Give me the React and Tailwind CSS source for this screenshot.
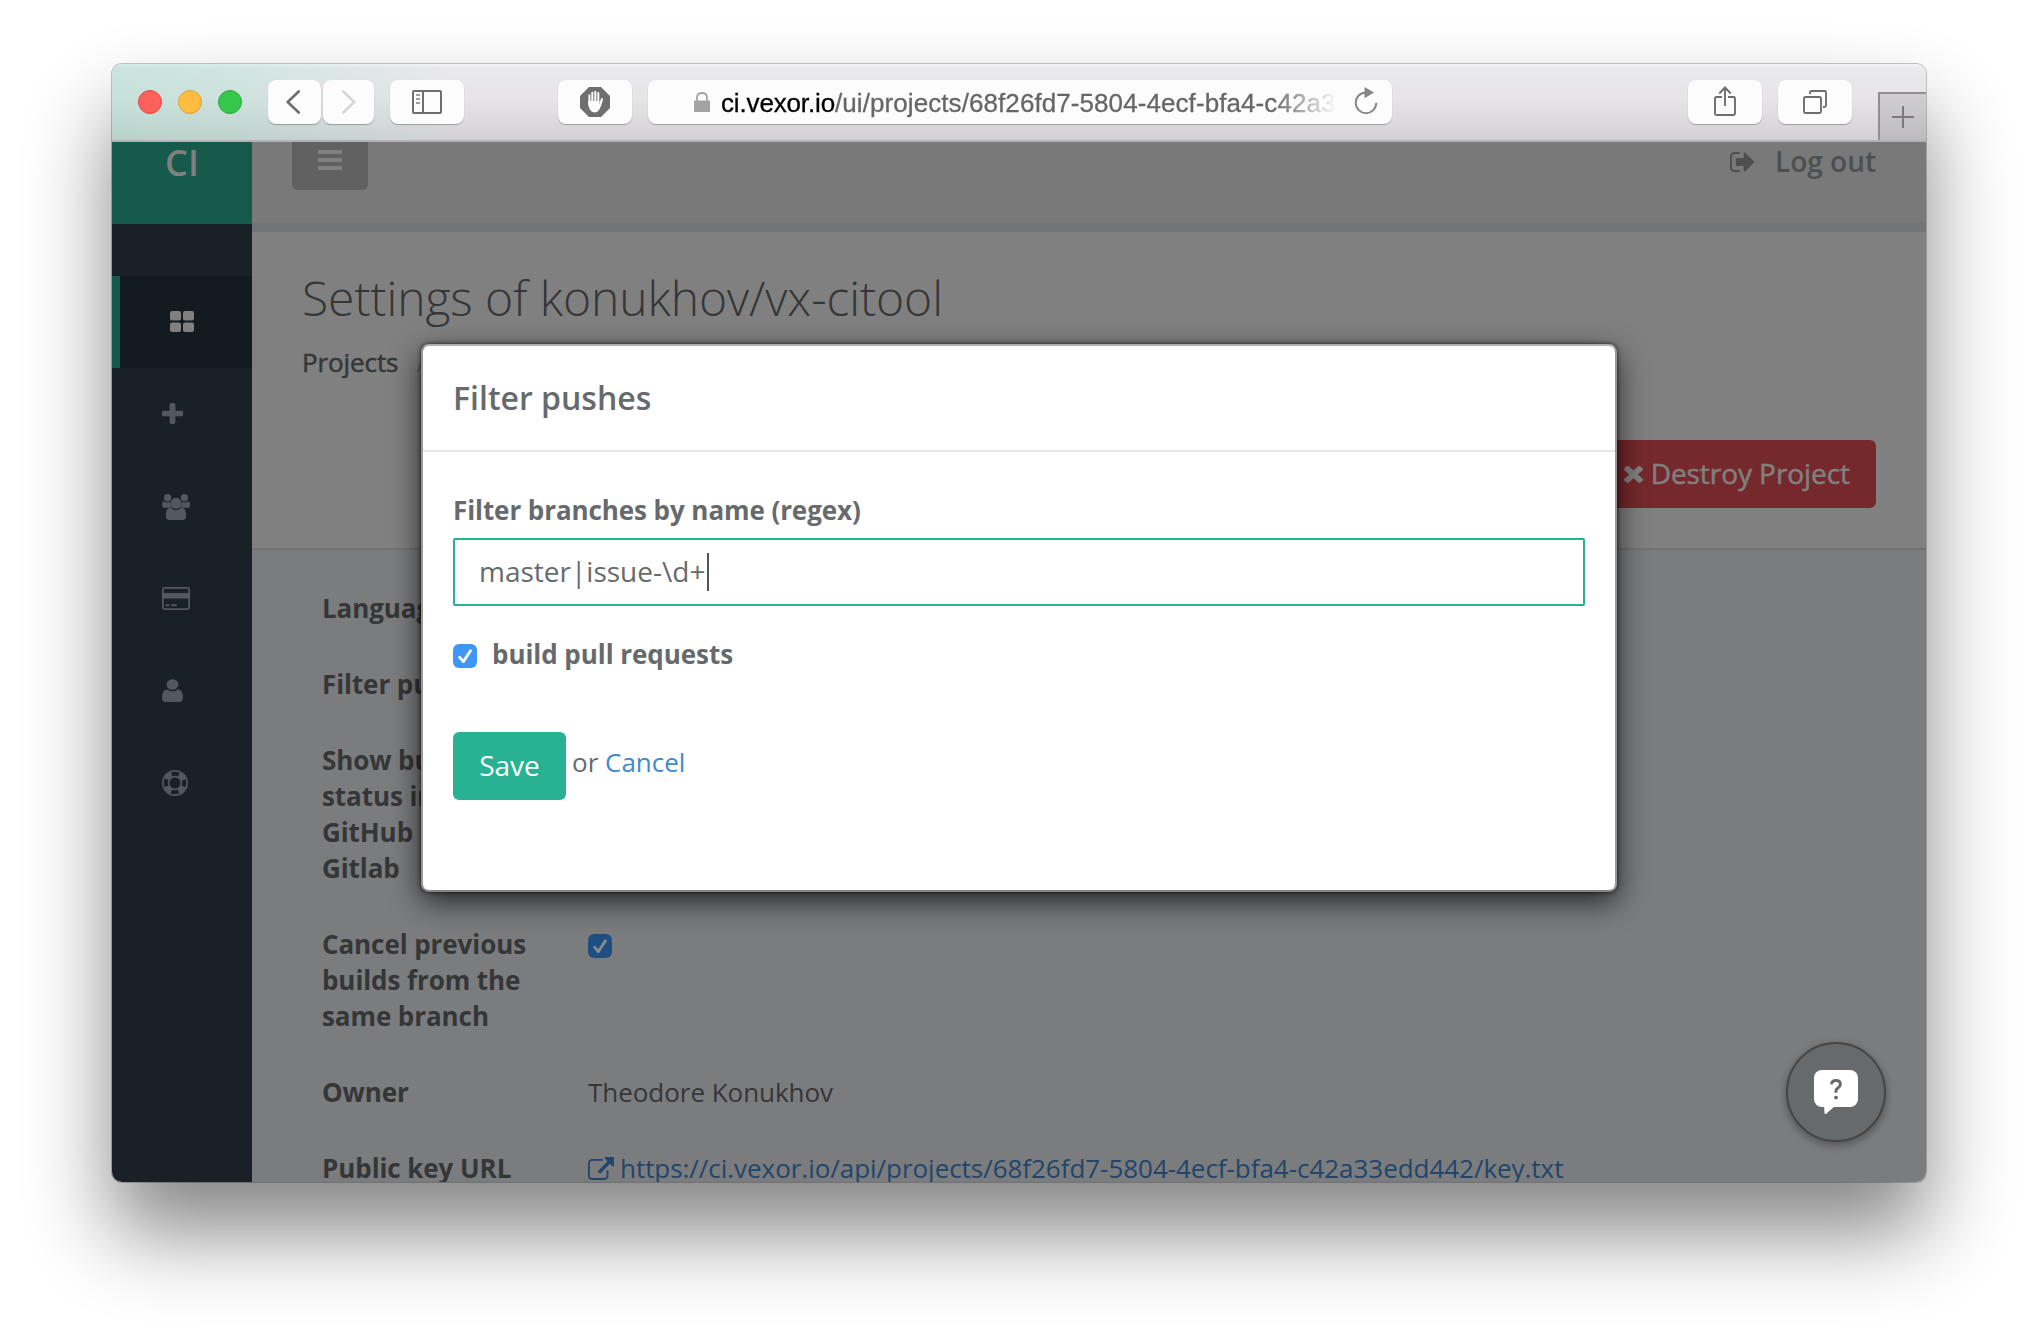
import React from "react";

/* Glyphs cropped to their own bounding box, so width and height set the drawn size. */
function Glyph({ box, className, children }) {
  return (
    <svg viewBox={box} preserveAspectRatio="none" fill="currentColor" className={"shrink-0 " + className}>
      {children}
    </svg>
  );
}

const ThLarge = () => (
  <Glyph box="0 0 24 21" className="-mt-px w-6 h-[21px]">
    <rect width="11" height="9.6" rx="2" />
    <rect x="13" width="11" height="9.6" rx="2" />
    <rect y="11.4" width="11" height="9.6" rx="2" />
    <rect x="13" y="11.4" width="11" height="9.6" rx="2" />
  </Glyph>
);
const Plus = () => (
  <Glyph box="192 128 1408 1408" className="-mt-px w-[21px] h-[21px]">
    <path d="M1600 736v192q0 40-28 68t-68 28h-416v416q0 40-28 68t-68 28h-192q-40 0-68-28t-28-68v-416h-416q-40 0-68-28t-28-68v-192q0-40 28-68t68-28h416v-416q0-40 28-68t68-28h192q40 0 68 28t28 68v416h416q40 0 68 28t28 68z" />
  </Glyph>
);
const Users = () => (
  <Glyph box="0 0 28 26" className="mt-px w-7 h-[26px]">
    <circle cx="5.6" cy="3.7" r="3.7" />
    <circle cx="22.4" cy="3.7" r="3.7" />
    <path d="M2 7.2q1.6 1.2 3.6 1.2 1.4 0 2.6-.6-.2 3.8 2 6H3q-3 0-3-2.600q0-3.800 2-4zM26 7.200q-1.600 1.200-3.600 1.200-1.400 0-2.600-.6.200 3.800-2 6H25q3 0 3-2.600 0-3.800-2-4z" />
    <circle cx="14" cy="9.300" r="5.500" />
    <path d="M8.600 13.700Q14 18.200 19.400 13.700Q24.200 13.800 24.200 21.800Q24.200 26 20.600 26H7.400Q3.800 26 3.800 21.800Q3.800 13.800 8.600 13.700z" />
  </Glyph>
);
const Card = () => (
  <Glyph box="0 0 28 23" className="w-7 h-[23px]">
    <path fillRule="evenodd" d="M2.400 0H25.600Q28 0 28 2.400V20.600Q28 23 25.600 23H2.400Q0 23 0 20.600V2.400Q0 0 2.400 0zM2.400 1.700Q1.800 1.700 1.800 2.400V6H26.200V2.400Q26.200 1.700 25.600 1.700zM1.800 11.500V20.500Q1.800 21.200 2.400 21.200H25.600Q26.200 21.200 26.200 20.500V11.500z" />
    <rect x="3.600" y="17.300" width="3.700" height="1.900" />
    <rect x="9.200" y="17.300" width="5.600" height="1.900" />
  </Glyph>
);
const User = () => (
  <Glyph box="256 128 1280 1536" className="w-[21px] h-[23px]">
    <path d="M1536 1399q0 109-62.5 187t-150.5 78h-854q-88 0-150.5-78t-62.5-187q0-85 8.5-160.5t31.5-152 58.5-131 94-89 134.5-34.5q131 128 313 128t313-128q76 0 134.5 34.5t94 89 58.5 131 31.500 152 8.500 160.500zm-280-920q0 159-105 260t-255 101-255-101-105-250 105-250 255-101 255 101 105 240z" />
  </Glyph>
);
const LifeRing = () => (
  <svg viewBox="0 0 26 26" fill="none" stroke="currentColor" className="mt-px w-[26px] h-[26px] shrink-0">
    <circle cx="13" cy="13" r="12.100" strokeWidth="1.800" />
    <circle cx="13" cy="13" r="6.400" strokeWidth="1.700" />
    <circle cx="13" cy="13" r="9.300" strokeWidth="5" strokeDasharray="7.300 7.300" strokeDashoffset="-3.650" />
  </svg>
);
const SignOut = () => (
  <Glyph box="64 256 1568 1280" className="w-6 h-5">
    <path d="M704 1440q0 4 1 20t.5 26.500-3 23.500-10 19.500-20.500 6.500h-320q-119 0-203.500-84.500t-84.500-203.500v-704q0-119 84.500-203.500t203.500-84.500h320q13 0 22.500 9.500t9.500 22.500q0 4 1 20t.5 26.500-3 23.500-10 19.500-20.500 6.500h-320q-66 0-113 47t-47 113v704q0 66 47 113t113 47h312l11.500 1 11.500 3 8 5.500 7 9 2 13.500zm928-544q0 26-19 45l-544 544q-19 19-45 19t-45-19-19-45v-288h-448q-26 0-45-19t-19-45v-384q0-26 19-45t45-19h448v-288q0-26 19-45t45-19 45 19l544 544q19 19 19 45z" />
  </Glyph>
);
const Times = () => (
  <Glyph box="302 238 1188 1316" className="w-[19px] h-[19px]">
    <path d="M1490 1322q0 40-28 68l-136 136q-28 28-68 28t-68-28l-294-294-294 294q-28 28-68 28t-68-28l-136-136q-28-28-28-68t28-68l294-294-294-294q-28-28-28-68t28-68l136-136q28-28 68-28t68 28l294 294 294-294q28-28 68-28t68 28l136 136q28 28 28 68t-28 68l-294 294 294 294q28 28 28 68z" />
  </Glyph>
);
const ExternalLink = () => (
  <Glyph box="0 0 1792 1536" className="w-[26px] h-[23px]">
    <path d="M1408 928v320q0 119-84.500 203.500t-203.500 84.500h-832q-119 0-203.500-84.500t-84.500-203.500v-832q0-119 84.500-203.500t203.500-84.500h704q14 0 23 9t9 23v64q0 14-9 23t-23 9h-704q-66 0-113 47t-47 113v832q0 66 47 113t113 47h832q66 0 113-47t47-113v-320q0-14 9-23t23-9h64q14 0 23 9t9 23zm384-864v512q0 26-19 45t-45 19-45-19l-176-176-652 652q-10 10-23 10t-23-10l-114-114q-10-10-10-23t10-23l652-652-176-176q-19-19-19-45t19-45 45-19h512q26 0 45 19t19 45z" />
  </Glyph>
);

function ToolButton({ className, children }) {
  return (
    <div className={"flex h-11 shrink-0 items-center justify-center rounded-lg bg-[#fcfcfc] shadow-[0_1px_1px_rgba(0,0,0,0.28)] " + className}>
      {children}
    </div>
  );
}

function Toolbar() {
  return (
    <div className="flex h-[78px] shrink-0 border-b-2 border-[#b3b2b4] bg-[linear-gradient(90deg,rgba(120,215,185,0.28),rgba(120,215,185,0.22)_120px,rgba(120,215,185,0)_340px),linear-gradient(180deg,#f5f5f6,#eae9ec_4px,#e6e4e7_36px,#d3d1d4)] pl-[26px]">
      <div className="mt-[26px] flex gap-4">
        <span className="size-6 rounded-full border border-[#e2463f] bg-[#fd615c]" />
        <span className="size-6 rounded-full border border-[#de9f34] bg-[#fdbd41]" />
        <span className="size-6 rounded-full border border-[#27aa35] bg-[#35c84a]" />
      </div>
      <div className="ml-[26px] mt-4 flex gap-0.5">
        <ToolButton className="w-[53px]">
          <svg viewBox="0 0 14 24" className="-ml-1 h-6 w-3.5" fill="none" stroke="#6e6e6e" strokeWidth="2.600" strokeLinecap="round" strokeLinejoin="round">
            <path d="M12.700 1.500 1.700 12l11 10.500" />
          </svg>
        </ToolButton>
        <ToolButton className="w-[51px]">
          <svg viewBox="0 0 14 24" className="h-6 w-3.5" fill="none" stroke="#d6d6d6" strokeWidth="2.600" strokeLinecap="round" strokeLinejoin="round">
            <path d="M1.300 1.500 12.300 12l-11 10.500" />
          </svg>
        </ToolButton>
      </div>
      <ToolButton className="ml-4 mt-4 w-[74px]">
        <svg viewBox="0 0 30 24" className="h-6 w-[30px]" fill="none" stroke="#6e6e6e" strokeWidth="2">
          <rect x="1" y="1" width="28" height="22" rx="1" />
          <path d="M11 1v22" />
          <path d="M4 5h4M4 9h4M4 13h4" stroke="#a0a0a0" />
        </svg>
      </ToolButton>
      <ToolButton className="ml-[94px] mt-4 w-[74px]">
        <svg viewBox="0 0 30 30" className="h-[30px] w-[30px]">
          <path d="M9 0h12l9 9v12l-9 9H9l-9-9V9z" fill="#6f6f6f" />
          <g stroke="#fff" strokeLinecap="round" fill="none" strokeWidth="2">
            <path d="M9.400 8.200V18M12.300 5.800V16M15.300 4.800V16M18.300 6V17" />
            <path d="M22 12.200 20 18.500" strokeWidth="2.200" />
          </g>
          <path d="M8.400 14h10.900v3.400l1.900-1.400q-.6 5.600-3 8-1.400 1.400-3.600 1.400t-3.600-1.400q-2.600-2.600-2.600-6.500z" fill="#fff" />
        </svg>
      </ToolButton>
      <ToolButton className="ml-4 mt-4 w-[744px]">
        <svg viewBox="0 0 16 20" className="ml-[46px] mr-[11px] h-5 w-4 shrink-0">
          <path d="M3 9V5.800Q3 1 8 1t5 4.800V9" fill="none" stroke="#a3a3a3" strokeWidth="1.800" />
          <rect y="8.500" width="16" height="11.500" rx="0.500" fill="#a3a3a3" />
        </svg>
        <div className="mt-0.5 w-[615px] shrink-0 overflow-hidden whitespace-nowrap font-['Liberation_Sans',Arial,sans-serif] text-[26px] leading-[32px] tracking-[0.08px] text-[#666] [-webkit-text-stroke:0.3px_currentColor] [mask-image:linear-gradient(90deg,#000_552px,transparent_616px)]">
          <span className="tracking-[-0.15px] text-black">ci.vexor.io</span>/ui/projects/68f26fd7-5804-4ecf-bfa4-c42a33edd442
        </div>
        <svg viewBox="0 0 24 27" className="ml-auto mr-[14px] mb-[3px] h-[27px] w-6 shrink-0">
          <path d="M12 5.500A10.300 10.300 0 1 0 22.300 15.800" fill="none" stroke="#858585" strokeWidth="1.900" />
          <path d="M10.500 0 20 5.600 10.500 11.200z" fill="#858585" />
        </svg>
      </ToolButton>
      <ToolButton className="ml-auto mt-4 w-[74px]">
        <svg viewBox="0 0 22 30" className="mt-[-2px] h-[30px] w-[22px]" fill="none" stroke="#6e6e6e" strokeWidth="1.900">
          <path d="M8 11H2.500Q1 11 1 12.500V27.500Q1 29 2.500 29H19.500Q21 29 21 27.500V12.500Q21 11 19.500 11H14" />
          <path d="M11 20V1.500M5.300 7.500 11 1.500l5.700 6" />
        </svg>
      </ToolButton>
      <ToolButton className="ml-4 mt-4 w-[74px]">
        <svg viewBox="0 0 24 24" className="h-6 w-6" fill="none" stroke="#6e6e6e" strokeWidth="1.900">
          <rect x="1" y="7" width="17" height="16" rx="1.500" />
          <path d="M7 4V2.500Q7 1 8.500 1H21.500Q23 1 23 2.500V15.500Q23 17 21.500 17H20" />
        </svg>
      </ToolButton>
      <div className="ml-[26px] mt-7 flex w-12 items-center justify-center border-l-2 border-t-2 border-[#8f8e90] bg-black/10">
        <svg viewBox="0 0 22 22" className="h-[22px] w-[22px]" stroke="#7b7a7c" strokeWidth="2">
          <path d="M0 11h22M11 0v22" />
        </svg>
      </div>
    </div>
  );
}

function Sidebar() {
  const items = [Plus, Users, Card, User, LifeRing];
  return (
    <div className="flex w-[140px] shrink-0 flex-col bg-[#192027]">
      <div className="flex h-[82px] justify-center bg-[#155a4a]">
        <span className="h-12 text-[36px] font-semibold leading-[41px] text-[#808080]">CI</span>
      </div>
      <div className="mt-[52px] flex h-[92px] items-center border-l-8 border-[#145a4a] bg-[#131b21] pl-[50px] text-[#808080]">
        <ThLarge />
      </div>
      {items.map((Icon, i) => (
        <div key={i} className="flex h-[92px] items-center pl-[50px] text-[#535860]">
          <Icon />
        </div>
      ))}
    </div>
  );
}

function Check({ color, tick }) {
  return (
    <span className={"flex size-6 shrink-0 items-center justify-center rounded-md " + color}>
      <svg viewBox="0 0 24 24" className="size-6" fill="none" stroke={tick} strokeWidth="2.800" strokeLinecap="round" strokeLinejoin="round">
        <path d="M6.500 13.200 10.300 17.600 17.500 6.800" />
      </svg>
    </span>
  );
}

function Row({ label, children }) {
  return (
    <div className="flex">
      <div className="w-[266px] shrink-0 whitespace-pre-line font-bold tracking-[-0.08px]">{label}</div>
      <div className="whitespace-nowrap tracking-[-0.04px]">{children}</div>
    </div>
  );
}

function Page() {
  return (
    <div className="flex min-w-0 flex-1 flex-col bg-[#7b7c7e] text-[#353637]">
      <div className="flex h-20 shrink-0 justify-between bg-[#797979] pl-10 pr-[50px]">
        <div className="flex h-12 w-[76px] flex-col items-center gap-1 rounded-b-md bg-[#616161] pt-2">
          <span className="h-1 w-6 rounded-[1px] bg-[#808080]" />
          <span className="h-1 w-6 rounded-[1px] bg-[#808080]" />
          <span className="h-1 w-6 rounded-[1px] bg-[#808080]" />
        </div>
        <div className="flex h-[39px] items-center gap-[21px] text-[28px] font-semibold leading-[39px] text-[#4d4f50]">
          <SignOut />
          <span>Log out</span>
        </div>
      </div>
      <div className="h-2.5 shrink-0 bg-[#727476]" />
      <div className="flex h-[318px] shrink-0 flex-col border-b-2 border-[#737374] bg-[#808080] pl-[50px] pr-[50px] pt-10">
        <h1 className="whitespace-nowrap text-[48px] font-light leading-[52px] tracking-[-0.07px]">Settings of konukhov/vx-citool</h1>
        <div className="mt-5 flex h-9 gap-[18px] text-[26px] leading-9">
          <span className="tracking-[-0.1px] [-webkit-text-stroke:0.5px_currentColor]">Projects</span>
          <span className="text-[#666]">/</span>
        </div>
        <div className="ml-auto mt-[60px] flex h-[68px] items-center gap-2 rounded-md bg-[#76292c] pb-0.5 pl-7 pr-[26px] text-[28px] text-[#808080]">
          <Times />
          <span className="tracking-[-0.06px] [-webkit-text-stroke:0.5px_currentColor]">Destroy Project</span>
        </div>
      </div>
      <div className="flex flex-col gap-10 pl-[70px] pt-10 text-[26px] leading-9">
        <Row label="Language" />
        <Row label="Filter pushes" />
        <Row label={"Show build\nstatus in\nGitHub\nGitlab"} />
        <Row label={"Cancel previous\nbuilds from the\nsame branch"}>
          <div className="pt-2">
            <Check color="bg-[#1f4f82]" tick="#8a8a8a" />
          </div>
        </Row>
        <Row label="Owner">Theodore Konukhov</Row>
        <Row label="Public key URL">
          <span className="flex items-center gap-1.5 text-[#22456a]">
            <ExternalLink />
            https://ci.vexor.io/api/projects/68f26fd7-5804-4ecf-bfa4-c42a33edd442/key.txt
          </span>
        </Row>
      </div>
    </div>
  );
}

function Modal() {
  return (
    <div className="absolute left-[309px] top-[280px] h-[548px] w-[1196px] rounded-lg border-2 border-x-[#999] border-b-[#858585] border-t-[#aeaeae] bg-white text-[#676a6c] shadow-[0_0_4px_rgba(0,0,0,0.75),0_10px_30px_rgba(0,0,0,0.7)]">
      <div className="h-[106px] border-b-2 border-[#e5e5e5] pl-[30px] pt-8">
        <h4 className="text-[32px] font-semibold leading-[40px]">Filter pushes</h4>
      </div>
      <div className="px-[30px] pt-10 text-[26px] leading-9">
        <div className="font-bold tracking-[-0.08px]">Filter branches by name (regex)</div>
        <div className="mt-2.5 flex h-[68px] items-center rounded-[2px] border-2 border-[#28b293] pl-6 text-[28px]">
          <span className="pb-0.5">master|issue-\d+</span>
          <span className="ml-0.5 h-[38px] w-0.5 bg-[#555]" />
        </div>
        <div className="mt-[30px] flex gap-[15px]">
          <div className="pt-2">
            <Check color="bg-[#3e97f7]" tick="#fff" />
          </div>
          <span className="font-bold tracking-[-0.05px]">build pull requests</span>
        </div>
        <div className="mt-[60px] flex gap-1.5">
          <div className="flex h-[68px] w-[113px] items-center justify-center rounded-md bg-[#28b293] pb-0.5 text-[28px] text-white">Save</div>
          <div className="mt-3">
            or <span className="text-[#428bca]">Cancel</span>
          </div>
        </div>
      </div>
    </div>
  );
}

function HelpButton() {
  return (
    <div className="absolute bottom-10 right-10 flex size-[100px] items-center justify-center rounded-full border-2 border-[#434648] bg-[#676a6c] shadow-[0_3px_8px_rgba(0,0,0,0.35)]">
      <div className="relative -mt-[7px] flex h-[37px] w-11 items-center justify-center rounded-lg bg-white pt-0.5 text-[#676a6c]">
        <svg viewBox="0 0 12 22" className="h-[21px] w-3" fill="none" stroke="currentColor" strokeWidth="3">
          <path d="M1.200 5.700Q1.600 1.600 6 1.600q4.600 0 4.600 4 0 2-2.300 3.500T6 12.500V14.500" />
          <circle cx="6" cy="19.500" r="2" fill="currentColor" stroke="none" />
        </svg>
        <svg viewBox="0 0 11 8" className="absolute left-2.5 top-[36px] h-2 w-[11px]">
          <path d="M0 0h11L2.500 7.600Q.6 9 .6 7z" fill="#fff" />
        </svg>
      </div>
    </div>
  );
}

export default function App() {
  return (
    <div className="h-[1342px] w-[2038px] overflow-hidden bg-white pl-28 pt-16 font-['Open_Sans','Noto_Sans',sans-serif]">
      <div className="h-[1118px] w-[1814px] rounded-[10px] shadow-[0_0_0_1px_rgba(0,0,0,0.22),0_50px_84px_rgba(0,0,0,0.48)]">
        <div className="relative flex h-full flex-col overflow-hidden rounded-[10px]">
          <Toolbar />
          <div className="flex min-h-0 flex-1 overflow-hidden">
            <Sidebar />
            <Page />
          </div>
          <Modal />
          <HelpButton />
        </div>
      </div>
    </div>
  );
}
